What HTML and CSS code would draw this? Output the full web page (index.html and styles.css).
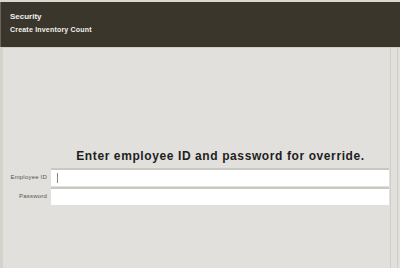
FILE: index.html
```html
<!DOCTYPE html>
<html lang="en">

<head>
  <meta charset="UTF-8" />
  <meta name="viewport" content="width=device-width, initial-scale=1.0" />
  <title>Security</title>
  <link rel="stylesheet" href="styles.css">
</head>

<body>
  <div class="screen">

    <div class="header">
      <p class="title">Security</p>
      <p class="subtitle">Create Inventory Count</p>
    </div>

    <div class="content">
      <div class="main">
        <h1 class="prompt">Enter employee ID and password for override.</h1>

        <div class="form">
          <label for="emp">Employee ID</label>
          <div class="field"><input id="emp" type="text" /><span class="caret"></span></div>
          <label for="pwd">Password</label>
          <div class="field"><input id="pwd" type="password" /></div>
        </div>
      </div>
      <div class="side"></div>
    </div>

  </div>
</body>

</html>
```

FILE: styles.css
```css
* {
  box-sizing: border-box;
}

body {
  margin: 0;
  font-family: "Liberation Sans", Arial, sans-serif;
  background: #e1e0dc;
}

.screen {
  width: 400px;
  height: 268px;
  padding-top: 2px;
  background: #d9d9d2;
  display: flex;
  flex-direction: column;
}

.header {
  height: 45px;
  background: #3b362c;
  border-left: 1px solid #6a665c;
  padding: 10px 0 0 9px;
  color: #f2f1ec;
}

.header p {
  margin: 0;
  font-weight: bold;
}

.header .title {
  font-size: 8px;
  margin-bottom: 5px;
}

.header .subtitle {
  font-size: 7px;
  letter-spacing: 0.2px;
}

.content {
  flex: 1;
  display: flex;
  background: #e1e0dc;
  border-top: 1px solid #cfcec7;
  border-left: 3px solid #d3d3ca;
}

.main {
  flex: 1;
  padding-top: 101px;
}

.side {
  width: 8px;
  border-left: 1px solid #cfcfc8;
  border-right: 1px solid #cfcfc8;
  margin-right: 2px;
}

.prompt {
  margin: 0 0 5px 48px;
  font-size: 12px;
  font-weight: bold;
  color: #1e1e1e;
  text-align: center;
  letter-spacing: 0.6px;
}

.form {
  display: grid;
  grid-template-columns: 44px 1fr;
  column-gap: 4px;
  row-gap: 1px;
  align-items: center;
}

.form label {
  font-size: 6px;
  color: #55544f;
  text-align: right;
  letter-spacing: 0.2px;
}

.field {
  position: relative;
}

.field input {
  display: block;
  width: 338px;
  height: 18px;
  margin: 0;
  border: none;
  border-top: 2px solid #c9c8c1;
  background: #fff;
  outline: none;
}

.caret {
  position: absolute;
  left: 6px;
  top: 5px;
  width: 1px;
  height: 10px;
  background: #888;
}
```
